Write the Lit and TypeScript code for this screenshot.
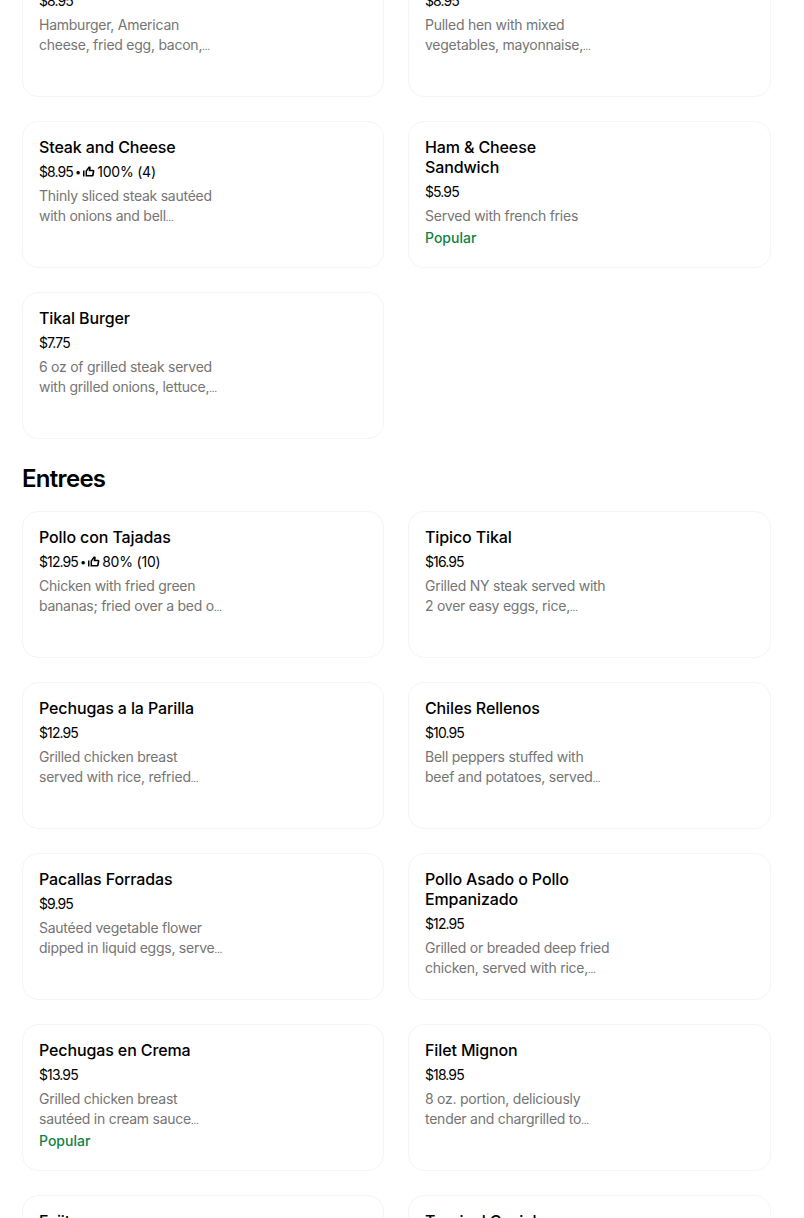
import { LitElement, html, css, svg } from "lit";
import { customElement } from "lit/decorators.js";

interface Item { name: string[]; price: string; rating?: string; desc: string[]; popular?: boolean; }

const first: Item[] = [
  { name: [""], price: "$8.95", desc: ["Hamburger, American", "cheese, fried egg, bacon,…"] },
  { name: [""], price: "$8.95", desc: ["Pulled hen with mixed", "vegetables, mayonnaise,…"] },
  { name: ["Steak and Cheese"], price: "$8.95", rating: "100% (4)", desc: ["Thinly sliced steak sautéed", "with onions and bell…"] },
  { name: ["Ham & Cheese", "Sandwich"], price: "$5.95", desc: ["Served with french fries"], popular: true },
  { name: ["Tikal Burger"], price: "$7.75", desc: ["6 oz of grilled steak served", "with grilled onions, lettuce,…"] },
];
const entrees: Item[] = [
  { name: ["Pollo con Tajadas"], price: "$12.95", rating: "80% (10)", desc: ["Chicken with fried green", "bananas; fried over a bed o…"] },
  { name: ["Tipico Tikal"], price: "$16.95", desc: ["Grilled NY steak served with", "2 over easy eggs, rice,…"] },
  { name: ["Pechugas a la Parilla"], price: "$12.95", desc: ["Grilled chicken breast", "served with rice, refried…"] },
  { name: ["Chiles Rellenos"], price: "$10.95", desc: ["Bell peppers stuffed with", "beef and potatoes, served…"] },
  { name: ["Pacallas Forradas"], price: "$9.95", desc: ["Sautéed vegetable flower", "dipped in liquid eggs, serve…"] },
  { name: ["Pollo Asado o Pollo", "Empanizado"], price: "$12.95", desc: ["Grilled or breaded deep fried", "chicken, served with rice,…"] },
  { name: ["Pechugas en Crema"], price: "$13.95", desc: ["Grilled chicken breast", "sautéed in cream sauce…"], popular: true },
  { name: ["Filet Mignon"], price: "$18.95", desc: ["8 oz. portion, deliciously", "tender and chargrilled to…"] },
  { name: ["Fajitas"], price: "", desc: [] },
  { name: ["Tropical Ceviche"], price: "", desc: [] },
];

const thumb = svg`<path fill="#000" fill-rule="evenodd" d="M0 6h2v8H0zM3.4 14V6.3L7.6.8h1.3c1 0 1.7.9 1.5 1.9L9.9 5H13.4c1.2 0 2 1.1 1.8 2.2l-1 5.3c-.2.9-.9 1.5-1.8 1.5H3.4zm2-2h6.5l1.2-5H7.4l.8-3.6-2.8 3.6V12z"/>`;

@customElement("app-root")
export class AppRoot extends LitElement {
  static styles = css`
    :host { display: block; height: 1218px; overflow: hidden; background: #fff; font-family: Inter, "Liberation Sans", sans-serif; color: #000; }
    .page { margin-top: -50px; padding: 0 33px 0 22px; }
    .grid { display: grid; grid-template-columns: 362px 363px; column-gap: 24px; row-gap: 24px; }
    .card { box-sizing: border-box; height: 147px; padding: 15px 16px 0; border: 1px solid #f5f5f5; border-radius: 16px; }
    h3 { margin: 0; min-height: 20px; font-size: 16px; line-height: 20px; font-weight: 500; white-space: nowrap; letter-spacing: -.12px; }
    .meta { display: flex; align-items: center; margin-top: 5px; height: 20px; font-size: 14px; line-height: 20px; white-space: nowrap; }
    .price { letter-spacing: -.9px; }
    .rating { letter-spacing: -.2px; }
    .dot { margin: 0 2px; font-size: 11px; }
    .thumb { width: 12px; height: 12px; margin-right: 2px; }
    .desc { margin-top: 4px; font-size: 14px; line-height: 20px; color: #757575; white-space: nowrap; letter-spacing: -.25px; }
    .ell { font-size: 9px; line-height: 0; letter-spacing: 0; }
    .pop { margin-top: 2px; font-size: 14px; line-height: 20px; font-weight: 500; color: #0e8345; }
    h2 { margin: 24px 0 16px; font-size: 24px; line-height: 32px; font-weight: 600; letter-spacing: -.7px; }
  `;

  private line(l: string) {
    return l.endsWith("…") ? html`${l.slice(0, -1)}<span class="ell">…</span>` : l;
  }

  private card(i: Item) {
    return html`<article class="card">
      <h3>${i.name.map((l, n) => html`${n ? html`<br />` : ""}${l}`)}</h3>
      <div class="meta"><span class="price">${i.price}</span>${i.rating ? html`<span class="dot">•</span><svg class="thumb" viewBox="0 0 16 16">${thumb}</svg><span class="rating">${i.rating}</span>` : ""}</div>
      ${i.desc.length ? html`<div class="desc">${i.desc.map((l, n) => html`${n ? html`<br />` : ""}${this.line(l)}`)}</div>` : ""}
      ${i.popular ? html`<div class="pop">Popular</div>` : ""}
    </article>`;
  }

  render() {
    return html`<main class="page">
      <section class="grid">${first.map((i) => this.card(i))}</section>
      <h2>Entrees</h2>
      <section class="grid">${entrees.map((i) => this.card(i))}</section>
    </main>`;
  }
}
